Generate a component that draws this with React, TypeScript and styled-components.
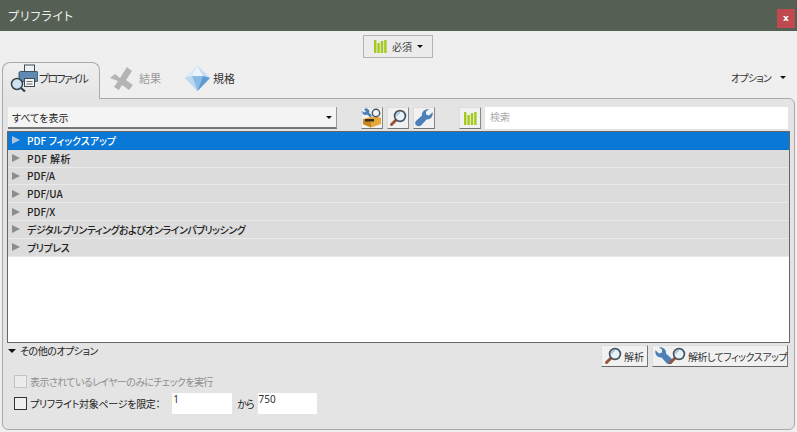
import styled, { createGlobalStyle } from 'styled-components';

const FONT = '"Noto Sans CJK JP", "Noto Sans", sans-serif';

const GlobalStyle = createGlobalStyle`
  html, body {
    margin: 0;
    padding: 0;
    background: #efefef;
  }
  * {
    box-sizing: border-box;
  }
`;

const Window = styled.div`
  display: flex;
  flex-direction: column;
  width: 797px;
  height: 432px;
  overflow: hidden;
  font-family: ${FONT};
  font-size: 10px;
  font-feature-settings: "palt";
  white-space: nowrap;
  color: #222;
  background: #efefef;
`;

const TitleBar = styled.div`
  display: flex;
  align-items: center;
  justify-content: space-between;
  flex: none;
  height: 31px;
  padding: 0 2px 0 8px;
  font-size: 12px;
  letter-spacing: 0.8px;
  color: #eef0ec;
  background: #565f53;
`;

const CloseButton = styled.div`
  display: flex;
  align-items: center;
  justify-content: center;
  width: 18px;
  height: 19px;
  margin-top: 5px;
  font-family: "DejaVu Sans", sans-serif;
  font-size: 9px;
  font-weight: 700;
  letter-spacing: 0;
  color: #fff;
  background: #c0484f;
`;

const RequiredRow = styled.div`
  display: flex;
  justify-content: center;
  flex: none;
  height: 31px;
  padding: 4px 1px 4px 0;
`;

const RequiredButton = styled.div`
  display: flex;
  align-items: center;
  gap: 5px;
  width: 70px;
  height: 23px;
  padding-left: 10px;
  border: 1px solid #b4b4b4;
  font-size: 10px;
  color: #444;
  background: #ececec;
`;

const Caret = styled.span<{ $gap?: number }>`
  flex: none;
  width: 0;
  height: 0;
  margin-left: ${props => props.$gap ?? 0}px;
  border-top: 3px solid #111;
  border-left: 3px solid transparent;
  border-right: 3px solid transparent;
`;

const TabRow = styled.div`
  position: relative;
  z-index: 1;
  display: flex;
  align-items: center;
  flex: none;
  height: 37px;
  margin-bottom: -1px;
  padding-left: 2px;
`;

const Tab = styled.div<{ $active?: boolean; $width: number; $muted?: boolean; $gap: number; $pad: number }>`
  display: flex;
  align-items: center;
  gap: ${props => props.$gap}px;
  width: ${props => props.$width}px;
  height: 37px;
  padding: 0 0 6px ${props => props.$pad}px;
  border: 1px solid ${props => (props.$active ? '#aaa' : 'transparent')};
  border-bottom: none;
  border-radius: 8px 8px 0 0;
  font-size: 11px;
  color: ${props => (props.$muted ? '#9a9a9a' : '#333')};
  background: ${props => (props.$active ? 'linear-gradient(#efefef, #e4e4e4)' : 'transparent')};
`;

const NarrowText = styled.span<{ $spacing: number }>`
  letter-spacing: ${props => props.$spacing}px;
`;

const OptionMenu = styled.div`
  display: flex;
  align-items: center;
  margin-left: auto;
  padding: 0 11px 7px 0;
  font-size: 10px;
  color: #333;
`;

const Panel = styled.div`
  display: flex;
  flex-direction: column;
  flex: none;
  height: 332px;
  margin: 0 2px;
  padding: 7px 5px 0 4px;
  border: 1px solid #aaa;
  border-radius: 0 6px 6px 6px;
  background: #e4e4e4;
`;

const Toolbar = styled.div`
  display: flex;
  align-items: center;
  flex: none;
  height: 24px;
  margin-bottom: 1px;
  padding-left: 1px;
`;

const Select = styled.div`
  display: flex;
  align-items: center;
  justify-content: space-between;
  width: 329px;
  height: 22px;
  margin-right: 24px;
  padding: 1px 4px 0;
  border-bottom: 2px solid #777;
  border-right: 1px solid #999;
  font-size: 10px;
  color: #222;
  background: #f4f4f4;
`;

const ToolButton = styled.div<{ $gap?: number }>`
  display: flex;
  align-items: center;
  justify-content: center;
  flex: none;
  width: 22px;
  height: 22px;
  margin-right: ${props => props.$gap ?? 4}px;
  border: 1px solid #ddd;
  border-right-color: #888;
  border-bottom-color: #777;
  background: #f1f1f1;
`;

const SearchBox = styled.div`
  display: flex;
  align-items: center;
  width: 303px;
  height: 22px;
  padding: 0 0 3px 5px;
  font-size: 10px;
  color: #aaa;
  background: #fff;
`;

const TreeList = styled.div`
  flex: none;
  width: 783px;
  height: 212px;
  border: 1px solid #666;
  background: #fff;
`;

const TreeRow = styled.div<{ $selected?: boolean; $spacing: number }>`
  display: flex;
  align-items: center;
  height: 17.8px;
  padding-left: 4px;
  border-bottom: 1px solid ${props => (props.$selected ? '#0a71c8' : '#e9e9e9')};
  font-size: 10px;
  font-weight: 500;
  letter-spacing: ${props => props.$spacing}px;
  color: ${props => (props.$selected ? '#fff' : '#222')};
  background: ${props => (props.$selected ? '#0a78d7' : '#dcdcdc')};
`;

const Arrow = styled.span<{ $selected?: boolean }>`
  flex: none;
  width: 0;
  height: 0;
  margin-right: 7px;
  border-left: 8px solid ${props => (props.$selected ? '#b0c4d8' : '#8c8c8c')};
  border-top: 4.5px solid transparent;
  border-bottom: 4.5px solid transparent;
`;

const FooterTop = styled.div`
  display: flex;
  justify-content: space-between;
  flex: none;
  height: 28px;
  padding: 0 1px;
`;

const Disclosure = styled.div`
  display: flex;
  align-items: center;
  gap: 4px;
  height: 15px;
  font-size: 10px;
  letter-spacing: -0.5px;
  color: #222;
`;

const DisclosureArrow = styled.span`
  width: 0;
  height: 0;
  border-top: 4px solid #111;
  border-left: 4px solid transparent;
  border-right: 4px solid transparent;
`;

const ActionGroup = styled.div`
  display: flex;
  gap: 4px;
`;

const ActionButton = styled.div<{ $width: number }>`
  display: flex;
  align-items: center;
  padding-left: 2px;
  width: ${props => props.$width}px;
  height: 22px;
  margin-top: 2px;
  border: 1px solid #ddd;
  border-right-color: #777;
  border-bottom-color: #666;
  font-size: 10px;
  color: #333;
  background: #f1f1f1;
`;

const ButtonIcons = styled.span`
  display: flex;
  flex: none;
  margin-right: 2px;

  svg + svg {
    margin-left: -5px;
  }
`;

const OptionRow = styled.div<{ $disabled?: boolean }>`
  display: flex;
  align-items: center;
  flex: none;
  height: ${props => (props.$disabled ? 21 : 23)}px;
  padding-left: 7px;
  font-size: 10px;
  color: ${props => (props.$disabled ? '#8e8e8e' : '#222')};
`;

const Check = styled.span<{ $disabled?: boolean }>`
  flex: none;
  width: 13px;
  height: 13px;
  margin-right: 3px;
  border: 1px solid ${props => (props.$disabled ? '#c4c4c4' : '#333')};
  background: ${props => (props.$disabled ? '#ececec' : '#f0f0f0')};
`;

const PageInput = styled.div`
  width: 60px;
  height: 21px;
  margin: 0 5px 0 12px;
  padding-left: 1px;
  font-family: "Noto Sans", sans-serif;
  font-size: 10px;
  line-height: 13px;
  color: #333;
  background: #fff;
`;

const PageInputEnd = styled(PageInput)`
  width: 59px;
  margin: 0 0 0 4px;
`;

const BarsIcon = () => (
  <svg width="13" height="13" viewBox="0 0 13 13">
    <rect x="0" y="0" width="2.4" height="13" fill="#a3c91b" />
    <rect x="3.4" y="3" width="2.4" height="10" fill="#a3c91b" />
    <rect x="6.8" y="1" width="2.4" height="12" fill="#a3c91b" />
    <rect x="10.2" y="0" width="2.4" height="13" fill="#a3c91b" />
  </svg>
);

const LensIcon = () => (
  <svg width="18" height="18" viewBox="0 0 18 18">
    <line x1="2.5" y1="15.5" x2="7" y2="11" stroke="#9c5236" strokeWidth="3" strokeLinecap="round" />
    <circle cx="11" cy="7" r="5.4" fill="#e8f2f9" stroke="#46535e" strokeWidth="1.7" />
    <path d="M7.8 7a3.3 3.3 0 0 1 3.2-3.2" fill="none" stroke="#a6c4da" strokeWidth="1.4" />
  </svg>
);

// flip: the jaw points to the upper left, as on the fixup button
const WrenchIcon = ({ flip }: { flip?: boolean }) => (
  <svg width="18" height="18" viewBox="0 0 18 18">
    <path
      transform={flip ? 'matrix(-1 0 0 1 18 0)' : undefined}
      d="M17.5 3.2L14 6.5 11 5.5V2.5L14.2.3C10-.5 6.5 2.5 7 6.5L1.5 11.5C-.5 13.5 0 15.5 1.5 16.5 3 17.8 5 17.5 6.5 16L11.5 10.5C15.5 11 18.5 7.5 17.5 3.2Z"
      fill="#4d80b6"
    />
  </svg>
);

const ProfileIcon = () => (
  <svg width="28" height="28" viewBox="0 0 28 28">
    <rect x="14.5" y="1" width="10" height="7" fill="#eef1f4" stroke="#3f4a52" />
    <rect x="9" y="7.5" width="19" height="10" rx="1.5" fill="#5f8ab3" stroke="#3d5266" />
    <rect x="14.5" y="14.5" width="10" height="8" fill="#f6f6f6" stroke="#3f4a52" />
    <line x1="16.5" y1="17.5" x2="22.5" y2="17.5" stroke="#666" />
    <line x1="16.5" y1="20" x2="22.5" y2="20" stroke="#666" />
    <circle cx="7" cy="20" r="5.5" fill="#cfe2ef" stroke="#35434e" strokeWidth="1.5" />
    <line x1="11" y1="24" x2="15" y2="27.5" stroke="#35434e" strokeWidth="2.2" />
  </svg>
);

const ResultIcon = () => (
  <svg width="27" height="25" viewBox="0 0 27 25">
    <path d="M1 12l5-4 5 4 7-11 5 4-6 9 7 5-4 5-7-5-3 5-5-3 4-6z" fill="#b4b4b4" />
  </svg>
);

const DiamondIcon = () => (
  <svg width="25" height="25" viewBox="0 0 25 25">
    <polygon points="12.5,0 25,12 12.5,25 0,12" fill="#a9cdec" />
    <polygon points="12.5,0 18,10 7,10" fill="#eef6fc" />
    <polygon points="12.5,0 25,12 18,10" fill="#c5dff3" />
    <polygon points="12.5,0 0,12 7,10" fill="#dcebf8" />
    <polygon points="7,10 18,10 12.5,25" fill="#8bbbe4" />
    <polygon points="18,10 25,12 12.5,25" fill="#5e9ad4" />
    <polygon points="0,12 7,10 12.5,25" fill="#bcd9f0" />
  </svg>
);

const FixupBoxIcon = () => (
  <svg width="20" height="20" viewBox="0 0 20 20">
    <polygon points="1,11 13,8 19,10 19,16 9,19.5 1,16" fill="#e6a83a" />
    <polygon points="1,11 9,14 9,19.5 1,16" fill="#c9851f" />
    <rect x="3" y="11" width="9" height="2.5" fill="#3d2f1f" />
    <circle cx="14" cy="5" r="3.7" fill="#eef4f8" stroke="#46535e" strokeWidth="1.4" />
    <path d="M2 1.5a3 3 0 0 1 5 3.2l3 2.8-1.5 2-3.5-3a3 3 0 0 1-4.5-3.5l2 1.5 1.5-1z" fill="#4d80b6" />
  </svg>
);

const ROWS = [
  { label: 'PDF フィックスアップ', spacing: 0 },
  { label: 'PDF 解析', spacing: 0.4 },
  { label: 'PDF/A', spacing: 0 },
  { label: 'PDF/UA', spacing: 0 },
  { label: 'PDF/X', spacing: 0 },
  { label: 'デジタルプリンティングおよびオンラインパブリッシング', spacing: -0.5 },
  { label: 'プリプレス', spacing: -0.4 },
];

const App = () => {
  const renderRows = () => {
    return ROWS.map((row, index) => (
      <TreeRow key={row.label} $selected={index === 0} $spacing={row.spacing}>
        <Arrow $selected={index === 0} />
        {row.label}
      </TreeRow>
    ));
  };

  return (
    <Window>
      <GlobalStyle />
      <TitleBar>
        プリフライト
        <CloseButton>x</CloseButton>
      </TitleBar>
      <RequiredRow>
        <RequiredButton>
          <BarsIcon />
          必須
          <Caret />
        </RequiredButton>
      </RequiredRow>
      <TabRow>
        <Tab $active $width={98} $gap={1} $pad={7}>
          <ProfileIcon />
          <NarrowText $spacing={-1.8}>プロファイル</NarrowText>
        </Tab>
        <Tab $muted $width={75} $gap={3} $pad={8}>
          <ResultIcon />
          結果
        </Tab>
        <Tab $width={80} $gap={3} $pad={9}>
          <DiamondIcon />
          規格
        </Tab>
        <OptionMenu>
          <NarrowText $spacing={-0.8}>オプション</NarrowText>
          <Caret $gap={9} />
        </OptionMenu>
      </TabRow>
      <Panel>
        <Toolbar>
          <Select>
            すべてを表示
            <Caret />
          </Select>
          <ToolButton>
            <FixupBoxIcon />
          </ToolButton>
          <ToolButton>
            <LensIcon />
          </ToolButton>
          <ToolButton $gap={24}>
            <WrenchIcon />
          </ToolButton>
          <ToolButton>
            <BarsIcon />
          </ToolButton>
          <SearchBox>検索</SearchBox>
        </Toolbar>
        <TreeList>{renderRows()}</TreeList>
        <FooterTop>
          <Disclosure>
            <DisclosureArrow />
            その他のオプション
          </Disclosure>
          <ActionGroup>
            <ActionButton $width={47}>
              <ButtonIcons>
                <LensIcon />
              </ButtonIcons>
              解析
            </ActionButton>
            <ActionButton $width={136}>
              <ButtonIcons>
                <WrenchIcon flip />
                <LensIcon />
              </ButtonIcons>
              <NarrowText $spacing={-0.5}>解析してフィックスアップ</NarrowText>
            </ActionButton>
          </ActionGroup>
        </FooterTop>
        <OptionRow $disabled>
          <Check $disabled />
          <NarrowText $spacing={-0.6}>表示されているレイヤーのみにチェックを実行</NarrowText>
        </OptionRow>
        <OptionRow>
          <Check />
          <NarrowText $spacing={-0.3}>プリフライト対象ページを限定：</NarrowText>
          <PageInput>1</PageInput>
          <NarrowText $spacing={-1}>から</NarrowText>
          <PageInputEnd>750</PageInputEnd>
        </OptionRow>
      </Panel>
    </Window>
  );
};

export default App;
